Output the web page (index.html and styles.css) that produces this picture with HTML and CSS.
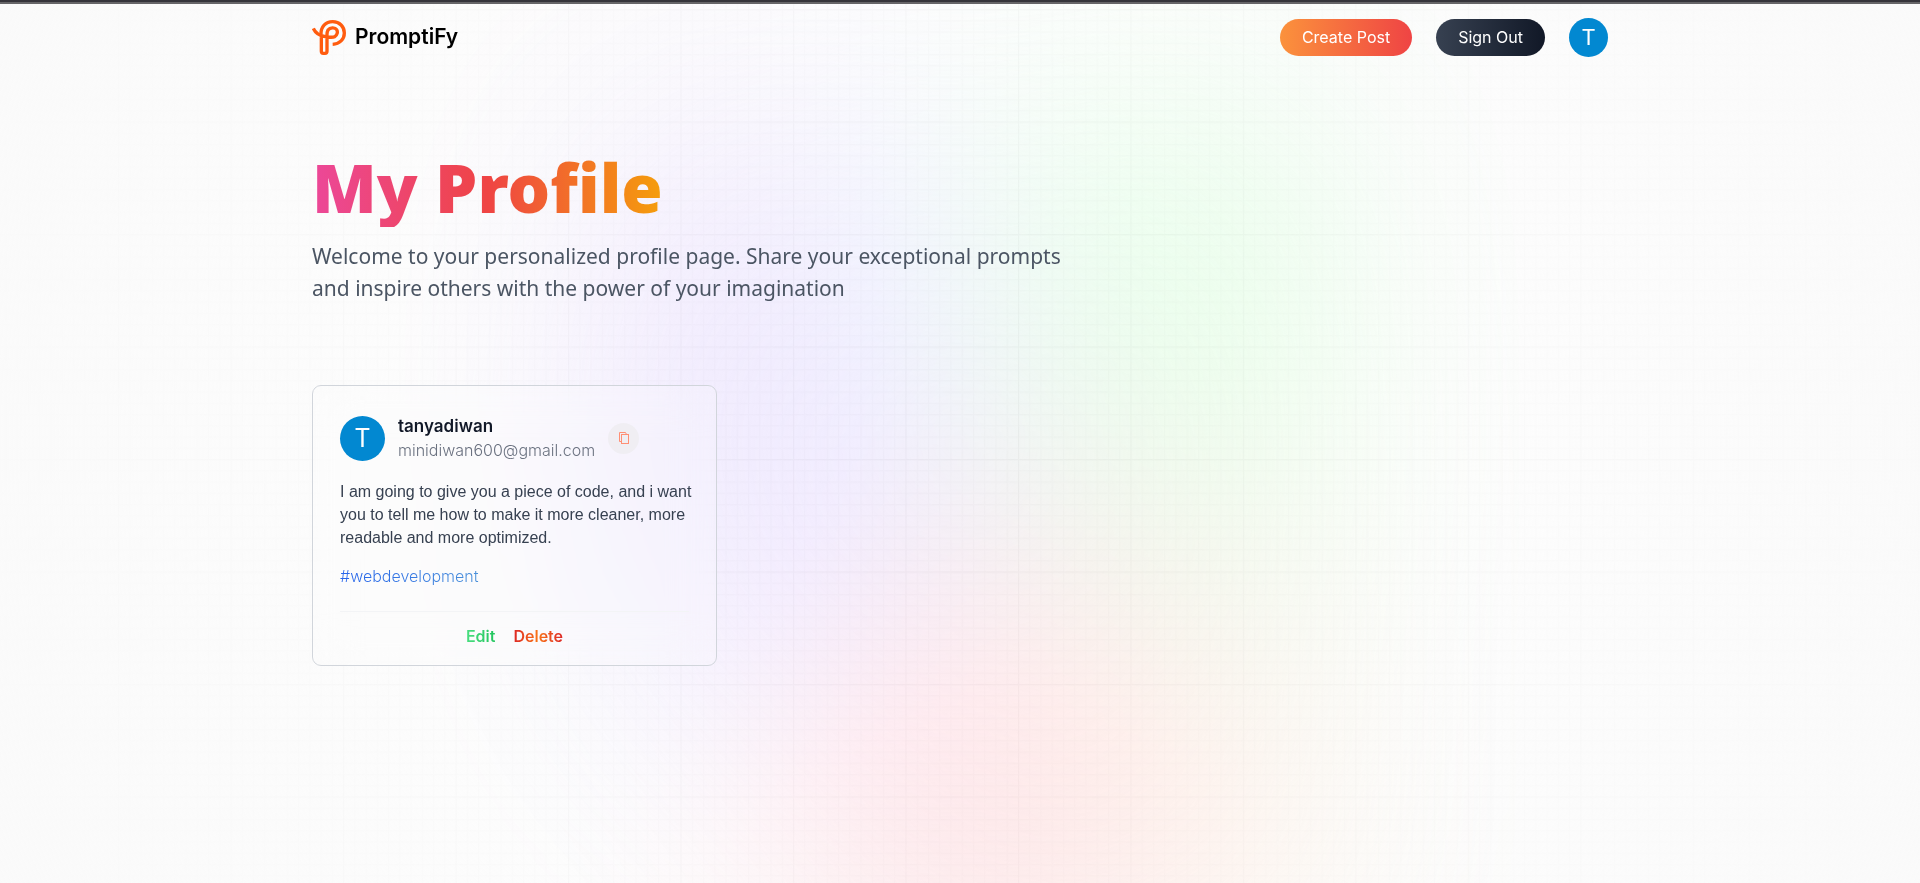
FILE: index.html
```html
<!DOCTYPE html>
<html lang="en">
<head>
  <meta charset="utf-8">
  <meta name="viewport" content="width=device-width, initial-scale=1">
  <title>PromptiFy</title>
  <link rel="stylesheet" href="styles.css">
</head>
<body>
  <div class="backdrop" aria-hidden="true">
    <svg class="grid-lines" viewBox="0 0 1707 785" preserveAspectRatio="xMidYMin slice">
      <defs>
        <pattern id="minor" x="5" y="8" width="10" height="10" patternUnits="userSpaceOnUse">
          <path d="M0 .5H10M.5 0V10" stroke="#000" stroke-opacity=".02" fill="none"/>
        </pattern>
        <pattern id="major" x="5" y="8" width="100" height="100" patternUnits="userSpaceOnUse">
          <path d="M0 .5H100M.5 0V100" stroke="#000" stroke-opacity=".02" fill="none"/>
        </pattern>
      </defs>
      <rect width="1707" height="785" fill="url(#minor)"/>
      <rect width="1707" height="785" fill="url(#major)"/>
    </svg>
    <div class="vignette"></div>
    <div class="gradient"></div>
  </div>

  <div class="window-edge"></div>

  <div class="app">
    <header class="nav">
      <a class="brand" href="#">
        <svg class="brand-mark" viewBox="36 57 105 111" fill="none" stroke="#ff5c0f" stroke-width="10" stroke-linecap="butt" stroke-linejoin="round" aria-hidden="true">
          <path d="M40 85C46 99 58 107 76 110C88 112 98 113 104 110C112 106 114 95 110 89C105 81 90 82 84 90C82 94 81 98 81 103V154Q81 160 75 160H70Q64 160 64 154V112"/>
          <path d="M63 104C62 80 77 65 98 65C119 65 133 80 133 99C133 118 119 132 98 133"/>
        </svg>
        <span>PromptiFy</span>
      </a>
      <nav class="actions">
        <a class="pill pill-warm" href="#">Create Post</a>
        <button class="pill pill-dark" type="button">Sign Out</button>
        <a class="avatar" href="#" aria-label="Profile">T</a>
      </nav>
    </header>

    <main class="profile">
      <h1 class="title">My Profile</h1>
      <p class="intro">Welcome to your personalized profile page. Share your exceptional prompts and inspire others with the power of your imagination</p>

      <article class="card">
        <div class="author">
          <span class="avatar avatar-large">T</span>
          <div class="author-text">
            <h2 class="author-name">tanyadiwan</h2>
            <p class="author-mail">minidiwan600@gmail.com</p>
          </div>
          <button class="copy" type="button" aria-label="Copy prompt">
            <svg viewBox="0 0 12 14" fill="none" stroke="#ff8f75" aria-hidden="true">
              <path d="M3.5 10.5H1.5V1.5H7.5L8.5 3.5"/>
              <rect x="3.500" y="3.500" width="7" height="9"/>
            </svg>
          </button>
        </div>
        <p class="prompt">I am going to give you a piece of code, and i want you to tell me how to make it more cleaner, more readable and more optimized.</p>
        <a class="tag" href="#">#webdevelopment</a>
        <div class="card-actions">
          <button class="link-button edit" type="button">Edit</button>
          <button class="link-button delete" type="button">Delete</button>
        </div>
      </article>
    </main>
  </div>
</body>
</html>
```
FILE: styles.css
```css
* {
  box-sizing: border-box;
}

body {
  margin: 0;
  background: #fff;
  font-family: Inter, "Liberation Sans", sans-serif;
  font-size: 16px;
  color: #111827;
}

h1, h2, p {
  margin: 0;
}

a {
  text-decoration: none;
  color: inherit;
}

button {
  border: 0;
  padding: 0;
  background: none;
  font: inherit;
  cursor: pointer;
}

/* Backdrop */
.backdrop {
  position: fixed;
  inset: 0;
  overflow: hidden;
  pointer-events: none;
}

.grid-lines {
  position: absolute;
  inset: 0;
  width: 100%;
  height: 100%;
}

.vignette {
  position: absolute;
  inset: 0;
  background: radial-gradient(circle, rgba(250, 250, 250, 0) 0, #fafafa 100%);
}

.gradient {
  position: absolute;
  top: 92px;
  left: 50%;
  width: 720px;
  height: 100%;
  transform: translateX(-50%);
  background-image:
    radial-gradient(at 27% 37%, hsla(215, 98%, 61%, 1) 0, transparent 0%),
    radial-gradient(at 97% 21%, hsla(125, 98%, 72%, 1) 0, transparent 50%),
    radial-gradient(at 52% 99%, hsla(354, 98%, 61%, 1) 0, transparent 50%),
    radial-gradient(at 10% 29%, hsla(256, 96%, 67%, 1) 0, transparent 50%),
    radial-gradient(at 97% 96%, hsla(38, 60%, 74%, 1) 0, transparent 50%),
    radial-gradient(at 33% 50%, hsla(222, 67%, 73%, 1) 0, transparent 50%),
    radial-gradient(at 79% 53%, hsla(343, 68%, 79%, 1) 0, transparent 50%);
  filter: blur(112px) saturate(150%);
  opacity: 0.15;
}

.window-edge {
  position: relative;
  height: 4px;
  background: #35343a;
  border-bottom: 2px solid #666568;
}

/* Page */
.app {
  position: relative;
  max-width: 1344px;
  margin: 0 auto;
  padding: 0 24px;
}

.nav {
  display: flex;
  align-items: center;
  justify-content: space-between;
  padding-top: 14px;
}

.brand {
  display: flex;
  align-items: center;
  gap: 8px;
  font-size: 21px;
  font-weight: 600;
  color: #000;
}

.brand span {
  padding-bottom: 2px;
}

.brand-mark {
  width: 35px;
  height: 37px;
}

.actions {
  display: flex;
  align-items: center;
  gap: 24px;
}

.pill {
  display: flex;
  align-items: center;
  height: 37px;
  padding: 0 22px 2px;
  border-radius: 19px;
  font-size: 16px;
  color: #fff;
}

.pill-warm {
  background: linear-gradient(to right, #fb923c, #ef4444);
}

.pill-dark {
  background: linear-gradient(to right, #374151, #111827);
}

.avatar {
  display: flex;
  align-items: center;
  justify-content: center;
  flex: none;
  width: 39px;
  height: 39px;
  border-radius: 50%;
  background: #0288d1;
  font-family: Roboto, sans-serif;
  font-size: 22px;
  color: #fff;
}

.avatar-large {
  width: 45px;
  height: 45px;
  font-size: 25px;
}

.profile {
  padding-top: 90px;
}

.title {
  width: fit-content;
  font-family: "Segoe UI", "Noto Sans", sans-serif;
  font-size: 67px;
  font-weight: 900;
  line-height: 80px;
  color: transparent;
  background: linear-gradient(to right, #ec4899, #ef4444, #f59e0b);
  -webkit-background-clip: text;
  background-clip: text;
}

.intro {
  max-width: 768px;
  margin-top: 13px;
  font-family: "Segoe UI", "Noto Sans", sans-serif;
  font-size: 21px;
  line-height: 32px;
  color: #4b5563;
}

/* Prompt card */
.card {
  width: 100%;
  max-width: 405px;
  margin-top: 81px;
  padding: 28px 27px 18px;
  border: 1px solid #d1d5db;
  border-radius: 9px;
  background: rgba(255, 255, 255, 0.2);
  backdrop-filter: blur(22px);
}

.author {
  display: flex;
  align-items: center;
  gap: 13px;
}

.author-name {
  font-size: 17px;
  font-weight: 600;
  line-height: 24px;
}

.author-mail {
  font-size: 16px;
  font-weight: 300;
  line-height: 24px;
  color: #6b7280;
}

.copy {
  display: flex;
  align-items: center;
  justify-content: center;
  width: 31px;
  height: 31px;
  border-radius: 50%;
  background: #f0eef3;
}

.copy svg {
  width: 12px;
  height: 14px;
}

.prompt {
  margin: 18px -8px 0 0;
  font-family: "Liberation Sans", Arial, sans-serif;
  font-size: 16px;
  line-height: 23px;
  color: #374151;
}

.tag {
  display: block;
  width: fit-content;
  margin-top: 16px;
  font-size: 16px;
  font-weight: 300;
  line-height: 22px;
  color: transparent;
  background: linear-gradient(to right, #2563eb, #4a90d9);
  -webkit-background-clip: text;
  background-clip: text;
}

.card-actions {
  display: flex;
  justify-content: center;
  gap: 18px;
  margin-top: 24px;
  padding-top: 13px;
  border-top: 1px solid #f3f4f6;
}

.link-button {
  font-size: 16px;
  font-weight: 600;
  line-height: 22px;
  color: transparent;
  -webkit-background-clip: text;
  background-clip: text;
}

.edit {
  background-image: linear-gradient(to right, #4ade80, #22c55e);
}

.delete {
  background-image: linear-gradient(to right, #dc2626, #f97316, #dc2626);
}
```
